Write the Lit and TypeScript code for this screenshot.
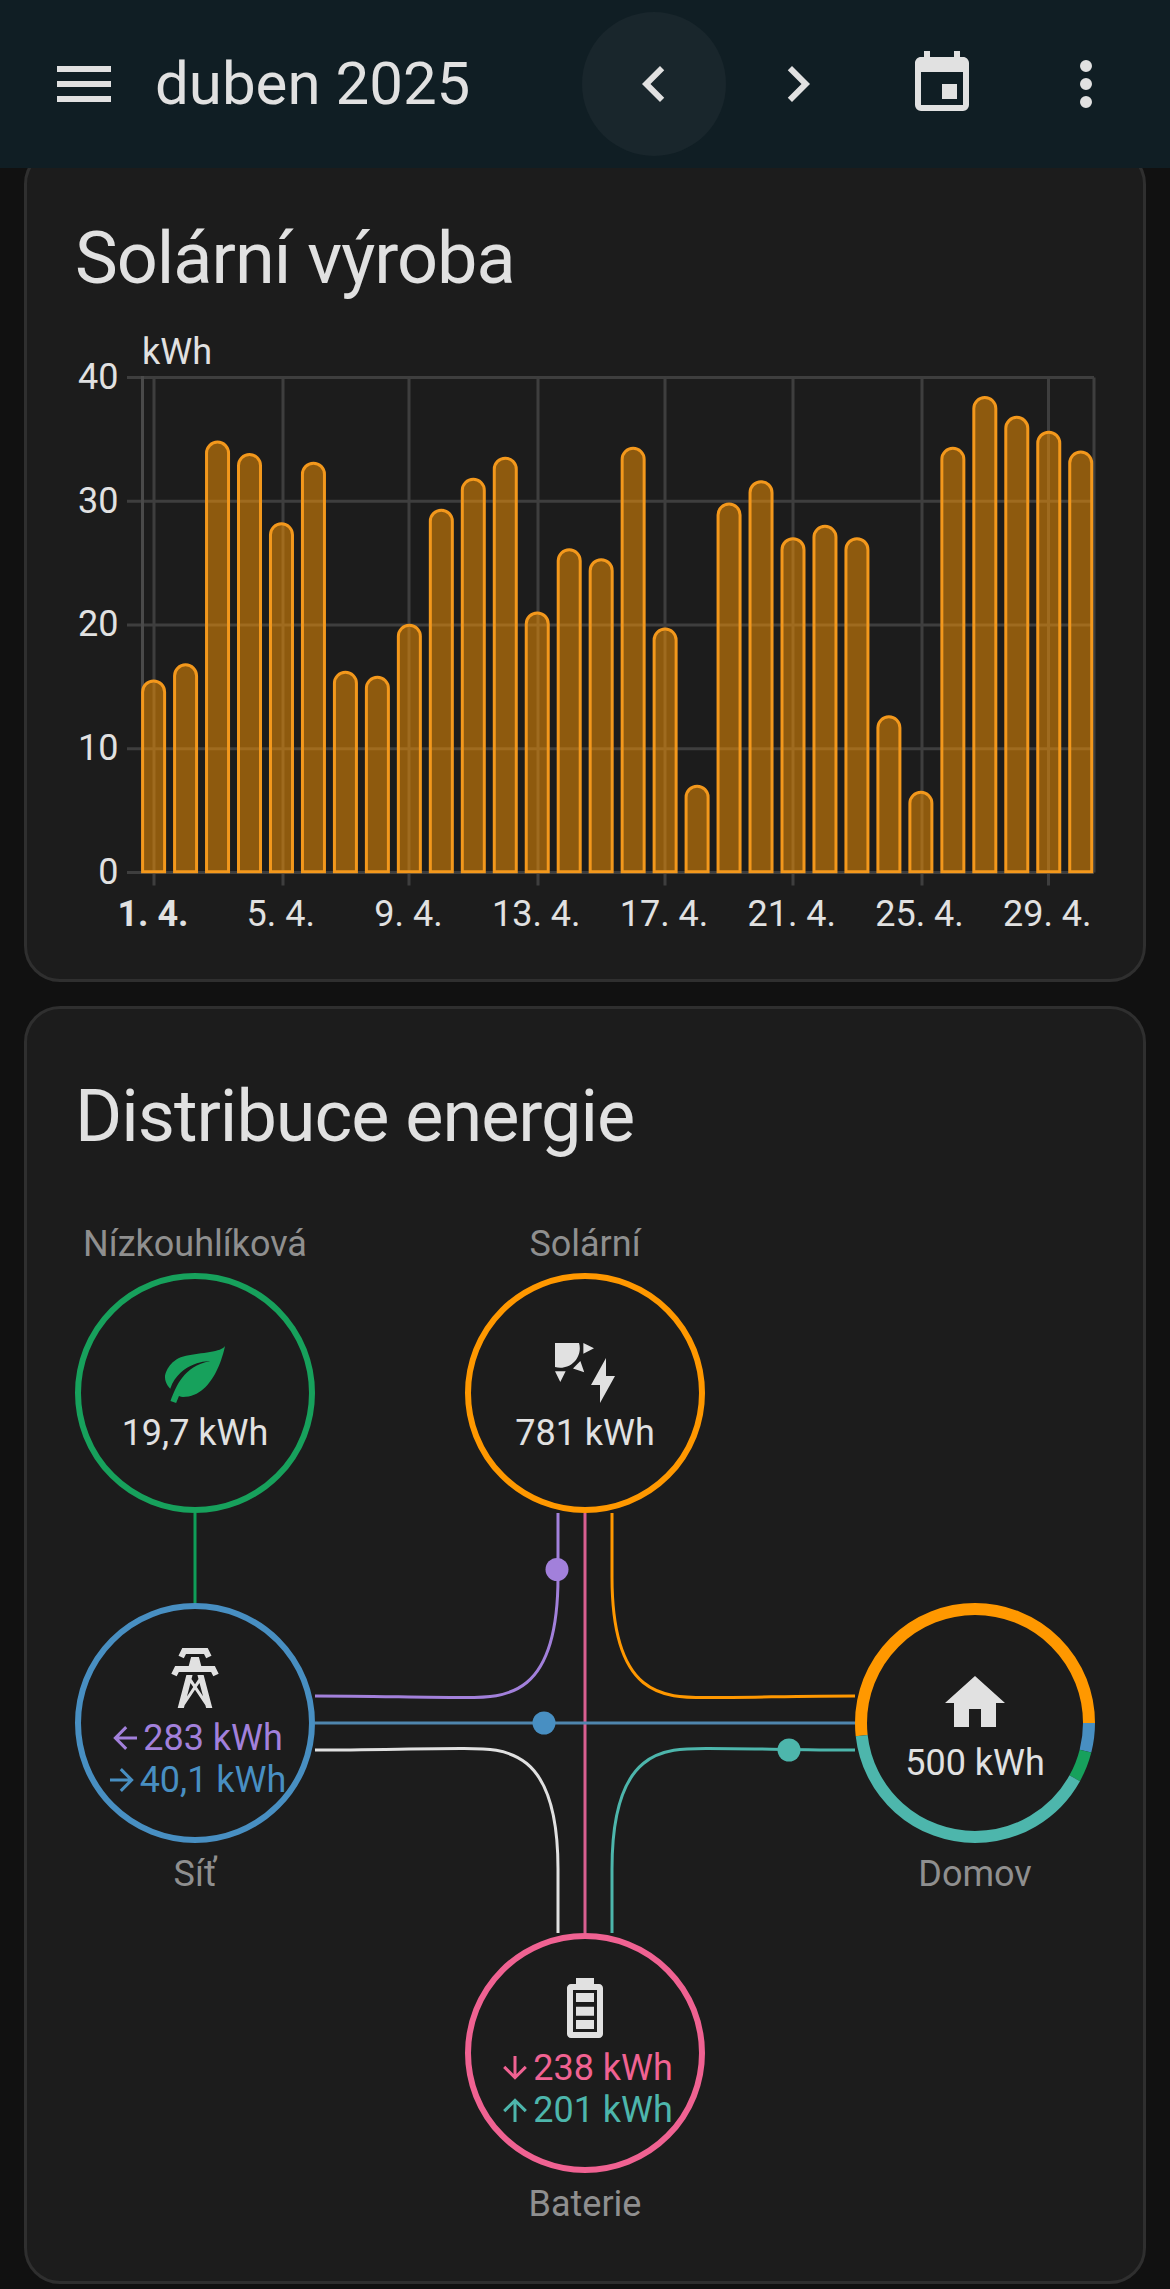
import { LitElement, html, css, svg } from "lit";
import { customElement } from "lit/decorators.js";

const P = {
  menu: "M3,6H21V8H3V6M3,11H21V13H3V11M3,16H21V18H3V16Z",
  left: "M15.41,16.58L10.83,12L15.41,7.41L14,6L8,12L14,18L15.41,16.58Z",
  right: "M8.59,16.58L13.17,12L8.59,7.41L10,6L16,12L10,18L8.59,16.58Z",
  calendar: "M19,19H5V8H19M16,1V3H8V1H6V3H5C3.89,3 3,3.89 3,5V19A2,2 0 0,0 5,21H19A2,2 0 0,0 21,19V5C21,3.89 20.1,3 19,3H18V1M17,12H12V17H17V12Z",
  dots: "M12,16A2,2 0 0,1 14,18A2,2 0 0,1 12,20A2,2 0 0,1 10,18A2,2 0 0,1 12,16M12,10A2,2 0 0,1 14,12A2,2 0 0,1 12,14A2,2 0 0,1 10,12A2,2 0 0,1 12,10M12,4A2,2 0 0,1 14,6A2,2 0 0,1 12,8A2,2 0 0,1 10,6A2,2 0 0,1 12,4Z",
  leaf: "M17,8C8,10 5.9,16.17 3.82,21.34L5.71,22L6.66,19.7C7.14,19.87 7.64,20 8,20C19,20 22,3 22,3C21,5 14,5.25 9,6.25C4,7.25 2,11.5 2,13.5C2,15.5 3.75,17.25 3.75,17.25C7,8 17,8 17,8Z",
  solar: "M11.45,2V5.55L15,3.77L11.45,2M10.45,8L8,10.46L11.75,11.71L10.45,8M2,11.45L3.77,15L5.55,11.45H2M10,2H2V10C2.57,10.17 3.17,10.25 3.77,10.25C7.35,10.26 10.26,7.35 10.27,3.75C10.26,3.16 10.17,2.57 10,2M17,22V16H14L19,7V13H22L17,22Z",
  tower: "M8.28,5.45L6.5,4.55L7.76,2H16.24L17.5,4.55L15.72,5.44L15,4H9L8.28,5.45M18.62,8H14.09L13.3,5H10.7L9.91,8H5.38L4.1,10.55L5.89,11.44L6.62,10H17.38L18.1,11.45L19.89,10.56L18.62,8M17.77,22H15.7L15.46,21.1L12,15.9L8.53,21.1L8.3,22H6.23L9.12,11H11.19L10.83,12.35L12,14.1L13.16,12.35L12.81,11H14.88L17.77,22M11.4,15L10.5,13.65L9.32,18.13L11.4,15M14.68,18.12L13.5,13.64L12.6,15L14.68,18.12Z",
  home: "M10,20V14H14V20H19V12H22L12,3L2,12H5V20H10Z",
  battery: "M16.67,4H15V2H9V4H7.33C6.6,4 6,4.6 6,5.33V20.67C6,21.4 6.6,22 7.33,22H16.67C17.41,22 18,21.41 18,20.67V5.33C18,4.6 17.4,4 16.67,4M16,20H8V6H16V20M15,7H9V10H15V7M15,11.6H9V14.6H15V11.6M15,16H9V19H15V16Z",
  aLeft: "M20,11V13H8L13.5,18.5L12.08,19.92L4.16,12L12.08,4.08L13.5,5.5L8,11H20Z",
  aRight: "M4,11V13H16L10.5,18.5L11.92,19.92L19.84,12L11.92,4.08L10.5,5.5L16,11H4Z",
  aDown: "M11,4H13V16L18.5,10.5L19.92,11.92L12,19.84L4.08,11.92L5.5,10.5L11,16V4Z",
  aUp: "M13,20H11V8L5.5,13.5L4.08,12.08L12,4.16L19.92,12.08L18.5,13.5L13,8V20Z",
};

const icon = (d: string, cls = "") =>
  html`<svg class="icon ${cls}" viewBox="0 0 24 24"><path d=${d}></path></svg>`;

const VALUES = [
  15.6, 16.9, 34.9, 33.9, 28.3, 33.2, 16.3, 15.9, 20.1, 29.4, 31.9, 33.6, 21.1, 26.2, 25.4,
  34.4, 19.8, 7.1, 29.9, 31.7, 27.1, 28.1, 27.1, 12.7, 6.6, 34.4, 38.5, 36.9, 35.7, 34.1,
];
const Y0 = 872;
const UNIT = 12.375;
const X_LABELS = ["1. 4.", "5. 4.", "9. 4.", "13. 4.", "17. 4.", "21. 4.", "25. 4.", "29. 4."];
const TICKS = [154, 283, 409, 538, 665, 793, 922, 1048.5];

const barPath = (v: number, i: number) => {
  const c = 153.6 + 31.97 * i;
  const top = Y0 + 1.5 - v * UNIT;
  const r = 11;
  return `M${c - r},871.2V${top + r}A${r},${r} 0 0 1 ${c + r},${top + r}V871.2Z`;
};

@customElement("app-root")
export class AppRoot extends LitElement {
  static styles = css`
    :host {
      display: block;
      position: relative;
      min-height: 2289px;
      background: #111111;
      font-family: Roboto, "Liberation Sans", sans-serif;
      color: #e1e1e1;
      overflow: hidden;
    }
    * { box-sizing: border-box; }
    .bar {
      position: absolute;
      top: 0; left: 0; right: 0;
      height: 168px;
      z-index: 2;
      background: #101e24;
      display: flex;
      align-items: center;
      padding: 0 12px;
    }
    .btn {
      width: 144px;
      height: 144px;
      border-radius: 50%;
      display: flex;
      align-items: center;
      justify-content: center;
      flex: none;
    }
    .btn.hover { background: #19262c; }
    .icon { width: 72px; height: 72px; fill: currentColor; display: block; flex: none; }
    .title {
      flex: 1;
      font-size: 60px;
      line-height: 72px;
      margin-left: -1px;
      white-space: nowrap;
    }
    main {
      display: flex;
      flex-direction: column;
      gap: 24px;
      padding: 147.5px 24px 5px;
    }
    .card {
      background: #1c1c1c;
      border: 3px solid #2f2f2f;
      border-radius: 36px;
    }
    h2 {
      margin: 0;
      padding: 60px 48px 0;
      font-size: 72px;
      line-height: 96px;
      font-weight: 400;
      letter-spacing: -1px;
      white-space: nowrap;
    }
    .chart { display: block; width: 1116px; height: 672.5px; }
    .chart text { font-size: 36px; fill: #e1e1e1; font-family: Roboto, "Liberation Sans", sans-serif; }
    .chart .y { text-anchor: end; }
    .chart .x { text-anchor: middle; }
    .chart .b { font-weight: 700; }
    .chart .grid { stroke: #3e3e3e; stroke-width: 3; fill: none; }
    .chart .axis { stroke: #4a4a4a; stroke-width: 3; fill: none; }
    .chart .v { fill: rgba(255, 152, 0, 0.5); stroke: #f3981c; stroke-width: 3; }

    .diagram { position: relative; height: 1116px; width: 1116px; }
    .lines { position: absolute; inset: 0; width: 1116px; height: 1116px; }
    .lines path { fill: none; stroke-width: 3; }
    .node {
      position: absolute;
      width: 240px;
      display: flex;
      flex-direction: column;
      align-items: center;
    }
    .low { left: 48px; top: 57.5px; }
    .sol { left: 438px; top: 57.5px; }
    .gri { left: 48px; top: 438px; }
    .hom { left: 828px; top: 438px; }
    .bat { left: 438px; top: 768px; }
    .label {
      font-size: 36px;
      line-height: 42px;
      color: #8f8f8f;
      white-space: nowrap;
    }
    .label.above { margin-bottom: 8.5px; }
    .label.below { margin-top: 9.5px; }
    .circle {
      position: relative;
      width: 240px;
      height: 240px;
      border-radius: 50%;
      border: 6px solid;
      display: flex;
      flex-direction: column;
      align-items: center;
      font-size: 36px;
      line-height: 42.5px;
      white-space: nowrap;
    }
    .one { padding-top: 58px; }
    .two { padding-top: 33px; }
    .val { margin-top: 2.5px; }
    .row { display: flex; align-items: center; justify-content: center; }
    .row .icon { width: 36px; height: 36px; }
    .c-low { border-color: #17a15c; }
    .c-sol { border-color: #ff9800; }
    .c-gri { border-color: #488fc2; }
    .c-bat { border-color: #f06292; }
    .c-hom { border-color: transparent; }
    .ring { position: absolute; left: -6px; top: -6px; width: 240px; height: 240px; }
    .ring circle { fill: none; stroke-width: 12; }
    .t-low { color: #17a15c; }
    .t-pur { color: #a280db; }
    .t-blu { color: #488fc2; }
    .t-pnk { color: #f06292; }
    .t-tea { color: #4db6ac; }
  `;

  private ringSeg(color: string, from: number, to: number) {
    return svg`<circle cx="120" cy="120" r="114" pathLength="360" stroke=${color}
      stroke-dasharray="${to - from} ${360 - (to - from)}" stroke-dashoffset=${-from}></circle>`;
  }

  private chart() {
    return html`<svg class="chart" viewBox="27 306.5 1116 672.5">
      ${[40, 30, 20, 10, 0].map((n) => {
        const y = Y0 - n * UNIT;
        return svg`<line class="grid" x1="127" x2="1094" y1=${y} y2=${y}></line>
          <text class="y" x="118.5" y=${y + 11.3}>${n}</text>`;
      })}
      <line class="axis" x1="142.5" x2="142.5" y1="375.5" y2="872"></line>
      <line class="grid" x1="1094" x2="1094" y1="377" y2="872"></line>
      ${TICKS.map((x) => svg`<line class="grid" x1=${x} x2=${x} y1="377" y2="885"></line>`)}
      ${VALUES.map((v, i) => svg`<path class="v" d=${barPath(v, i)}></path>`)}
      <text x="142" y="363.3">kWh</text>
      ${X_LABELS.map(
        (t, i) => svg`<text class="x ${i === 0 ? "b" : ""}" x=${153 + 127.75 * i} y="925">${t}</text>`
      )}
    </svg>`;
  }

  private lines() {
    const pur = "M531,348V412C531,535 477,532.5 434,532.5C393,532.5 343,531 288,531";
    const ora = "M585,348V412C585,535 639,532.5 682,532.5C723,532.5 773,531 828,531";
    const whi = "M531,768V704C531,581 477,583.5 434,583.5C393,583.5 343,585 288,585";
    const tea = "M585,768V704C585,581 639,583.5 682,583.5C723,583.5 773,585 828,585";
    return html`<svg class="lines" viewBox="0 0 1116 1116">
      <path stroke="#0f9d58" d="M168,348V438"></path>
      <path stroke=${"#a280db"} d=${pur}></path>
      <path stroke="#ff9800" d=${ora}></path>
      <path stroke="#e1e1e1" d=${whi}></path>
      <path stroke="#4db6ac" d=${tea}></path>
      <path stroke="#d85f90" d="M558,348V768"></path>
      <path stroke="#4f86ae" d="M288,558H828"></path>
      <circle cx="530" cy="404.5" r="11.5" fill="#a280db"></circle>
      <circle cx="517" cy="558" r="11.5" fill="#488fc2"></circle>
      <circle cx="762" cy="585" r="11.5" fill="#4db6ac"></circle>
    </svg>`;
  }

  render() {
    return html`
      <header class="bar">
        <div class="btn">${icon(P.menu)}</div>
        <div class="title">duben 2025</div>
        <div class="btn hover">${icon(P.left)}</div>
        <div class="btn">${icon(P.right)}</div>
        <div class="btn">${icon(P.calendar)}</div>
        <div class="btn">${icon(P.dots)}</div>
      </header>
      <main>
        <section class="card">
          <h2>Solární výroba</h2>
          ${this.chart()}
        </section>
        <section class="card">
          <h2>Distribuce energie</h2>
          <div class="diagram">
            ${this.lines()}
            <div class="node low">
              <div class="label above">Nízkouhlíková</div>
              <div class="circle one c-low">
                ${icon(P.leaf, "t-low")}
                <div class="val">19,7 kWh</div>
              </div>
            </div>
            <div class="node sol">
              <div class="label above">Solární</div>
              <div class="circle one c-sol">
                ${icon(P.solar)}
                <div class="val">781 kWh</div>
              </div>
            </div>
            <div class="node gri">
              <div class="circle two c-gri">
                ${icon(P.tower)}
                <div class="val">
                  <div class="row t-pur">${icon(P.aLeft)}<span>283 kWh</span></div>
                  <div class="row t-blu">${icon(P.aRight)}<span>40,1 kWh</span></div>
                </div>
              </div>
              <div class="label below">Síť</div>
            </div>
            <div class="node hom">
              <div class="circle one c-hom">
                <svg class="ring" viewBox="0 0 240 240">
                  ${this.ringSeg("#ff9800", 173.6, 360)}
                  ${this.ringSeg("#488fc2", 0, 14.3)}
                  ${this.ringSeg("#17a15c", 14.3, 29)}
                  ${this.ringSeg("#4db6ac", 29, 173.6)}
                </svg>
                ${icon(P.home)}
                <div class="val">500 kWh</div>
              </div>
              <div class="label below">Domov</div>
            </div>
            <div class="node bat">
              <div class="circle two c-bat">
                ${icon(P.battery)}
                <div class="val">
                  <div class="row t-pnk">${icon(P.aDown)}<span>238 kWh</span></div>
                  <div class="row t-tea">${icon(P.aUp)}<span>201 kWh</span></div>
                </div>
              </div>
              <div class="label below">Baterie</div>
            </div>
          </div>
        </section>
      </main>
    `;
  }
}
